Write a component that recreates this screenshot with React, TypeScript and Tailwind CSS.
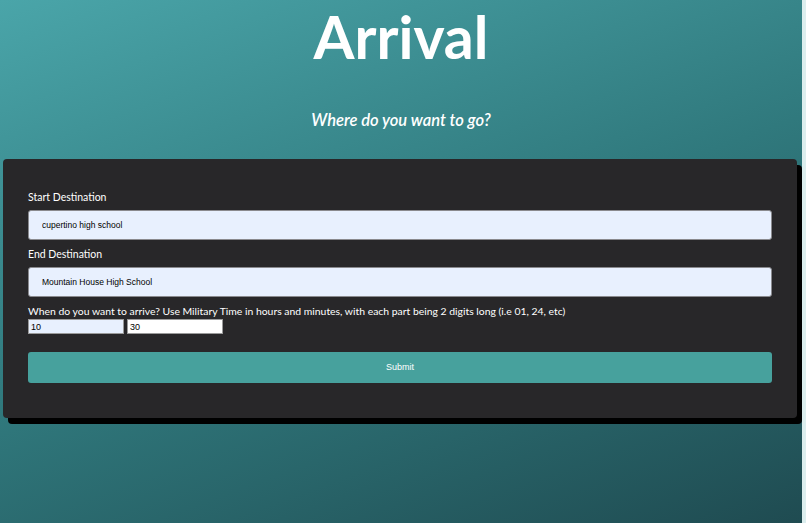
import { useState } from "react"

export default function App() {
  const [start, setStart] = useState("cupertino high school")
  const [end, setEnd] = useState("Mountain House High School")
  const [hours, setHours] = useState("10")
  const [minutes, setMinutes] = useState("30")

  return (
    <div className="flex min-h-[523px] w-full bg-[linear-gradient(160deg,#4aa5a9_0%,#30797d_50%,#1f4b51_100%)]">
      <div className="flex-1 flex flex-col font-['Lato',sans-serif]">
        {/* Header */}
        <div className="flex flex-col items-center">
          <h1 className="pt-[4px] text-[59px] leading-[66px] font-bold text-white">Arrival</h1>
          <p className="mt-[39px] text-[16.5px] leading-[22px] italic font-semibold text-white">
            Where do you want to go?
          </p>
        </div>

        {/* Form card */}
        <form
          onSubmit={(e) => e.preventDefault()}
          className="mt-[28px] ml-[3px] mr-[5px] rounded-[4px] bg-[#282729] px-[25px] pt-[30px] pb-[35px] shadow-[5px_6px_0_#000] flex flex-col"
        >
          <label className="text-[10.5px] leading-[16px] text-white">Start Destination</label>
          <input
            value={start}
            onChange={(e) => setStart(e.target.value)}
            className="mt-[5px] h-[30px] rounded-[3px] border border-[#8a8a8e] bg-[#e8f0fe] px-[13px] text-[8.5px] text-black font-['Liberation_Sans',sans-serif] outline-none"
          />
          <label className="mt-[6px] text-[10.5px] leading-[16px] text-white">End Destination</label>
          <input
            value={end}
            onChange={(e) => setEnd(e.target.value)}
            className="mt-[5px] h-[30px] rounded-[3px] border border-[#8a8a8e] bg-[#e8f0fe] px-[13px] text-[8.5px] text-black font-['Liberation_Sans',sans-serif] outline-none"
          />
          <label className="mt-[6px] text-[10.4px] leading-[16px] text-white">
            When do you want to arrive? Use Military Time in hours and minutes, with each part being 2 digits long (i.e 01, 24, etc)
          </label>
          <div className="flex gap-[3px]">
            <input
              value={hours}
              onChange={(e) => setHours(e.target.value)}
              className="w-[96px] h-[15px] border border-[#9a9a9a] bg-[#e8f0fe] px-[2px] text-[9px] text-black font-['Liberation_Sans',sans-serif] outline-none"
            />
            <input
              value={minutes}
              onChange={(e) => setMinutes(e.target.value)}
              className="w-[96px] h-[15px] border border-[#9a9a9a] bg-white px-[2px] text-[9px] text-black font-['Liberation_Sans',sans-serif] outline-none"
            />
          </div>
          <button
            type="submit"
            className="mt-[18px] h-[31px] rounded-[3px] bg-[#47a19d] text-[9px] text-white font-['Liberation_Sans',sans-serif]"
          >
            Submit
          </button>
        </form>
      </div>
      <div className="w-[4px] bg-[#dceeee]" />
    </div>
  )
}
